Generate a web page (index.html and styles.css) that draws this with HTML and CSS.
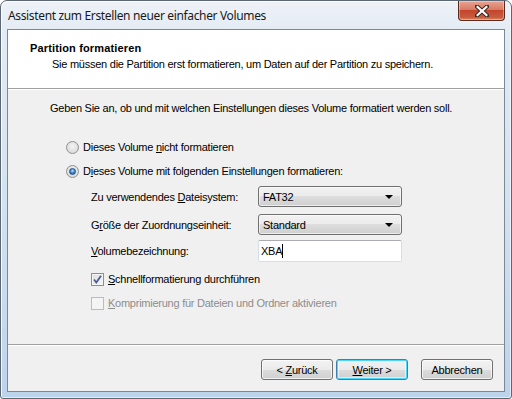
FILE: index.html
```html
<!DOCTYPE html>
<html lang="de">
<head>
  <meta charset="UTF-8">
  <meta name="viewport" content="width=device-width, initial-scale=1.0">
  <title>Assistent zum Erstellen neuer einfacher Volumes</title>
  <link rel="stylesheet" href="styles.css">
</head>
<body>
  <div class="window">
    <div class="titlebar">
      <span class="title">Assistent zum Erstellen neuer einfacher Volumes</span>
      <div class="close-btn">
        <svg width="14" height="12" viewBox="0 0 14 12">
          <path d="M2 1.5 L12 10.5 M12 1.5 L2 10.5" stroke="#3b2a25" stroke-width="4.2" stroke-linecap="square"/>
          <path d="M2.6 2 L11.4 10 M11.4 2 L2.6 10" stroke="#ffffff" stroke-width="2.2" stroke-linecap="square"/>
        </svg>
      </div>
    </div>

    <div class="client">
      <div class="header">
        <div class="header-title">Partition formatieren</div>
        <div class="header-sub">Sie müssen die Partition erst formatieren, um Daten auf der Partition zu speichern.</div>
      </div>

      <div class="content">
        <p class="intro">Geben Sie an, ob und mit welchen Einstellungen dieses Volume formatiert werden soll.</p>

        <div class="radio-row">
          <span class="radio"></span>
          <span>Dieses Volume <u>n</u>icht formatieren</span>
        </div>
        <div class="radio-row">
          <span class="radio checked"></span>
          <span>D<u>i</u>eses Volume mit folgenden Einstellungen formatieren:</span>
        </div>

        <div class="settings">
          <div class="setting-row row-fs">
            <span class="setting-label">Zu verwendendes <u>D</u>ateisystem:</span>
            <div class="combo"><span>FAT32</span><span class="combo-arrow"></span></div>
          </div>
          <div class="setting-row row-unit">
            <span class="setting-label">G<u>r</u>öße der Zuordnungseinheit:</span>
            <div class="combo"><span>Standard</span><span class="combo-arrow"></span></div>
          </div>
          <div class="setting-row row-name">
            <span class="setting-label"><u>V</u>olumebezeichnung:</span>
            <div class="textbox"><span>XBA</span><span class="caret"></span></div>
          </div>
        </div>

        <div class="check-row">
          <span class="checkbox">
            <svg width="11" height="11" viewBox="0 0 11 11">
              <path d="M2 5.5 L4.3 8.5 L9 1.8" fill="none" stroke="#4a5e94" stroke-width="1.8"/>
            </svg>
          </span>
          <span><u>S</u>chnellformatierung durchführen</span>
        </div>
        <div class="check-row disabled">
          <span class="checkbox"></span>
          <span><u>K</u>omprimierung für Dateien und Ordner aktivieren</span>
        </div>
      </div>

      <div class="footer">
        <button class="btn">&lt; <u>Z</u>urück</button>
        <button class="btn default"><u>W</u>eiter &gt;</button>
        <button class="btn cancel">Abbrechen</button>
      </div>
    </div>
  </div>
</body>
</html>
```

FILE: styles.css
```css
html, body {
  margin: 0;
  padding: 0;
  width: 512px;
  height: 399px;
  overflow: hidden;
  background-color: #ffffff;
}

body {
  font-family: 'Liberation Sans', Arial, sans-serif;
  font-size: 11px;
  letter-spacing: -0.25px;
  color: #000;
}

u {
  text-decoration: underline;
  text-underline-offset: 1px;
}

.window {
  width: 512px;
  height: 399px;
  box-sizing: border-box;
  display: flex;
  flex-direction: column;
  border: 1px solid #5b6774;
  border-radius: 7px 7px 3px 3px;
  background: linear-gradient(to bottom, #eef2f7 0%, #e3ebf4 8%, #d0dfef 60%, #bcd3ec 100%);
  box-shadow: inset 1px 1px 0 rgba(255,255,255,0.8), inset -1px -1px 0 rgba(255,255,255,0.6);
}

.titlebar {
  height: 29px;
  display: flex;
  align-items: flex-start;
  justify-content: space-between;
  flex-shrink: 0;
}

.title {
  font-family: 'Noto Sans', 'Open Sans', sans-serif;
  font-size: 12px;
  letter-spacing: -0.35px;
  color: #1a1a1a;
  padding-left: 7px;
  margin-top: 6px;
}

.close-btn {
  width: 45px;
  height: 19px;
  margin-right: 6px;
  border: 1px solid #5a2a20;
  border-top: none;
  border-radius: 0 0 4px 4px;
  background: linear-gradient(to bottom, #e8a493 0%, #d97a63 45%, #c4452c 50%, #c75a3d 85%, #dc8a60 100%);
  box-shadow: inset 0 0 0 1px rgba(255,255,255,0.35);
  display: flex;
  align-items: center;
  justify-content: center;
}

.client {
  margin: 0 7px 7px 7px;
  flex-grow: 1;
  display: flex;
  flex-direction: column;
  background-color: #f0f0f0;
  box-shadow: 0 0 0 1px #7b8898;
}

.header {
  height: 47px;
  background-color: #ffffff;
  border-bottom: 1px solid #a0a0a0;
  box-shadow: 0 1px 0 #ffffff;
  padding: 11px 0 0 22px;
  margin-bottom: 1px;
}

.header-title {
  font-weight: bold;
  letter-spacing: 0.15px;
  line-height: 14px;
}

.header-sub {
  padding-left: 22px;
  margin-top: 2px;
  line-height: 14px;
}

.content {
  display: flex;
  flex-direction: column;
}

.intro {
  margin: 12px 0 0 42px;
  line-height: 13px;
}

.radio-row {
  display: flex;
  align-items: center;
  height: 24px;
  padding-left: 58px;
  gap: 4px;
}

.radio-row:first-of-type {
  margin-top: 20px;
}

.radio {
  width: 11px;
  height: 11px;
  border: 1px solid #8e8f8f;
  border-radius: 50%;
  background: radial-gradient(circle at 50% 40%, #f4f4f4 0%, #dcdcdc 70%, #ececec 100%);
  display: flex;
  align-items: center;
  justify-content: center;
  flex-shrink: 0;
}

.radio.checked::after {
  content: '';
  width: 5px;
  height: 5px;
  border-radius: 50%;
  border: 1px solid #1e4f86;
  background: radial-gradient(circle at 50% 35%, #b5e0ff 0%, #3d8ad6 50%, #14558f 100%);
}

.settings {
  display: flex;
  flex-direction: column;
  padding-left: 83px;
  margin-top: 3px;
}

.setting-row {
  display: flex;
  align-items: center;
}

.setting-label {
  width: 167px;
}

.row-fs,
.row-unit {
  height: 21px;
}

.row-fs {
  margin-bottom: 7px;
}

.row-unit {
  margin-bottom: 5px;
}

.row-name {
  height: 22px;
}

.combo {
  width: 144px;
  height: 21px;
  box-sizing: border-box;
  border: 1px solid #707070;
  border-radius: 3px;
  background: linear-gradient(to bottom, #f2f2f2 0%, #ebebeb 50%, #dddddd 50%, #cfcfcf 100%);
  box-shadow: inset 0 0 0 1px rgba(255,255,255,0.6);
  display: flex;
  align-items: center;
  justify-content: space-between;
  padding: 0 8px 0 4px;
}

.combo-arrow {
  width: 0;
  height: 0;
  border-left: 4px solid transparent;
  border-right: 4px solid transparent;
  border-top: 4px solid #000;
}

.textbox {
  width: 144px;
  height: 22px;
  box-sizing: border-box;
  border: 1px solid #d5dfe9;
  border-top-color: #abadb3;
  border-radius: 2px;
  background-color: #ffffff;
  display: flex;
  align-items: center;
  padding-left: 2px;
}

.caret {
  width: 1px;
  height: 14px;
  background-color: #000;
}

.check-row {
  display: flex;
  align-items: center;
  height: 24px;
  padding-left: 83px;
  gap: 4px;
}

.settings + .check-row {
  margin-top: 5px;
}

.checkbox {
  width: 11px;
  height: 11px;
  border: 1px solid #8e8f8f;
  background: linear-gradient(135deg, #dcdcdc 0%, #f8f8f8 100%);
  box-shadow: inset 0 0 0 1px #f4f4f4;
  display: flex;
  align-items: center;
  justify-content: center;
  flex-shrink: 0;
}

.check-row.disabled {
  color: #8d8d8d;
}

.check-row.disabled .checkbox {
  border-color: #bcbcbc;
  background: #f4f4f4;
  box-shadow: none;
}

.footer {
  margin-top: auto;
  border-top: 1px solid #a0a0a0;
  box-shadow: inset 0 1px 0 #ffffff;
  padding: 14px 11px 11px 0;
  display: flex;
  justify-content: flex-end;
  gap: 3px;
}

.btn {
  width: 72px;
  height: 21px;
  font-family: 'Liberation Sans', Arial, sans-serif;
  font-size: 11px;
  letter-spacing: -0.25px;
  color: #000;
  border: 1px solid #707070;
  border-radius: 3px;
  background: linear-gradient(to bottom, #f2f2f2 0%, #ebebeb 50%, #dddddd 50%, #cfcfcf 100%);
  box-shadow: inset 0 0 0 1px rgba(255,255,255,0.7);
  padding: 0;
}

.btn.default {
  border-color: #3c7fb1;
  box-shadow: inset 0 0 0 1px #48d8fb, inset 0 0 0 2px rgba(255,255,255,0.5);
}

.btn.cancel {
  margin-left: 10px;
}
```
